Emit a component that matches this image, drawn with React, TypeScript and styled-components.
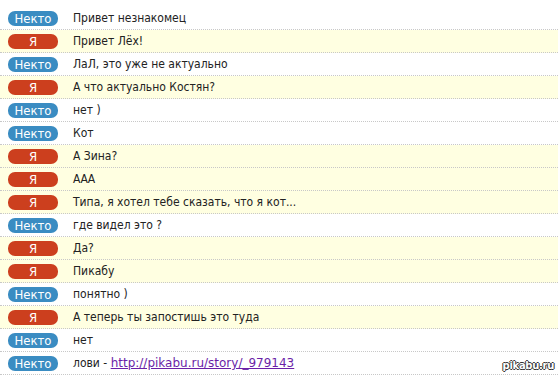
import { createGlobalStyle, styled } from 'styled-components';

type Who = 'stranger' | 'me';

const MESSAGES: { who: Who; text: string; link?: string }[] = [
  { who: 'stranger', text: 'Привет незнакомец' },
  { who: 'me', text: 'Привет Лёх!' },
  { who: 'stranger', text: 'ЛаЛ, это уже не актуально' },
  { who: 'me', text: 'А что актуально Костян?' },
  { who: 'stranger', text: 'нет )' },
  { who: 'stranger', text: 'Кот' },
  { who: 'me', text: 'А Зина?' },
  { who: 'me', text: 'ААА' },
  { who: 'me', text: 'Типа, я хотел тебе сказать, что я кот...' },
  { who: 'stranger', text: 'где видел это ?' },
  { who: 'me', text: 'Да?' },
  { who: 'me', text: 'Пикабу' },
  { who: 'stranger', text: 'понятно )' },
  { who: 'me', text: 'А теперь ты запостишь это туда' },
  { who: 'stranger', text: 'нет' },
  { who: 'stranger', text: 'лови - ', link: 'http://pikabu.ru/story/_979143' },
];

const GlobalStyle = createGlobalStyle`
  html, body {
    margin: 0;
    padding: 0;
    background: #fff;
  }
  body {
    font-family: 'DejaVu Sans Condensed', 'DejaVu Sans', Verdana, sans-serif;
  }
`;

const App = () => {
  return (
    <>
      <GlobalStyle />
      <Page>
        {MESSAGES.map((m, i) => (
          <Row key={i} $who={m.who}>
            <Badge $who={m.who}>{m.who === 'me' ? 'Я' : 'Некто'}</Badge>
            <Text>
              {m.text}
              {m.link && <Link href="#">{m.link}</Link>}
            </Text>
          </Row>
        ))}
        <Watermark>pikabu.ru</Watermark>
      </Page>
    </>
  );
};

export default App;

const Page = styled.div`
  position: relative;
  width: 558px;
  height: 376px;
  padding-top: 7px;
  box-sizing: border-box;
  overflow: hidden;
`;

const Row = styled.div<{ $who: Who }>`
  display: flex;
  align-items: center;
  height: 22px;
  border-bottom: 1px dotted #c8c8c8;
  background: ${(p) => (p.$who === 'me' ? '#ffffe1' : '#fff')};
`;

const Badge = styled.div<{ $who: Who }>`
  flex: none;
  width: 50px;
  height: 15px;
  margin-left: 8px;
  margin-right: 15px;
  border-radius: 7px;
  background: ${(p) => (p.$who === 'me' ? '#cc3f1e' : '#3a8cc2')};
  color: #fff;
  font-size: 13px;
  line-height: 15px;
  text-align: center;
`;

const Text = styled.div`
  font-size: 12px;
  color: #222;
  white-space: nowrap;
`;

const Link = styled.a`
  font-family: 'DejaVu Sans', Verdana, sans-serif;
  color: #6b1fa8;
  text-decoration: underline;
`;

const Watermark = styled.div`
  position: absolute;
  right: 4px;
  bottom: 5px;
  font-family: 'DejaVu Sans', sans-serif;
  font-size: 10px;
  font-weight: bold;
  color: #fff;
  letter-spacing: -0.3px;
  text-shadow:
    1px 0 0 #333,
    -1px 0 0 #333,
    0 1px 0 #333,
    0 -1px 0 #333;
`;
